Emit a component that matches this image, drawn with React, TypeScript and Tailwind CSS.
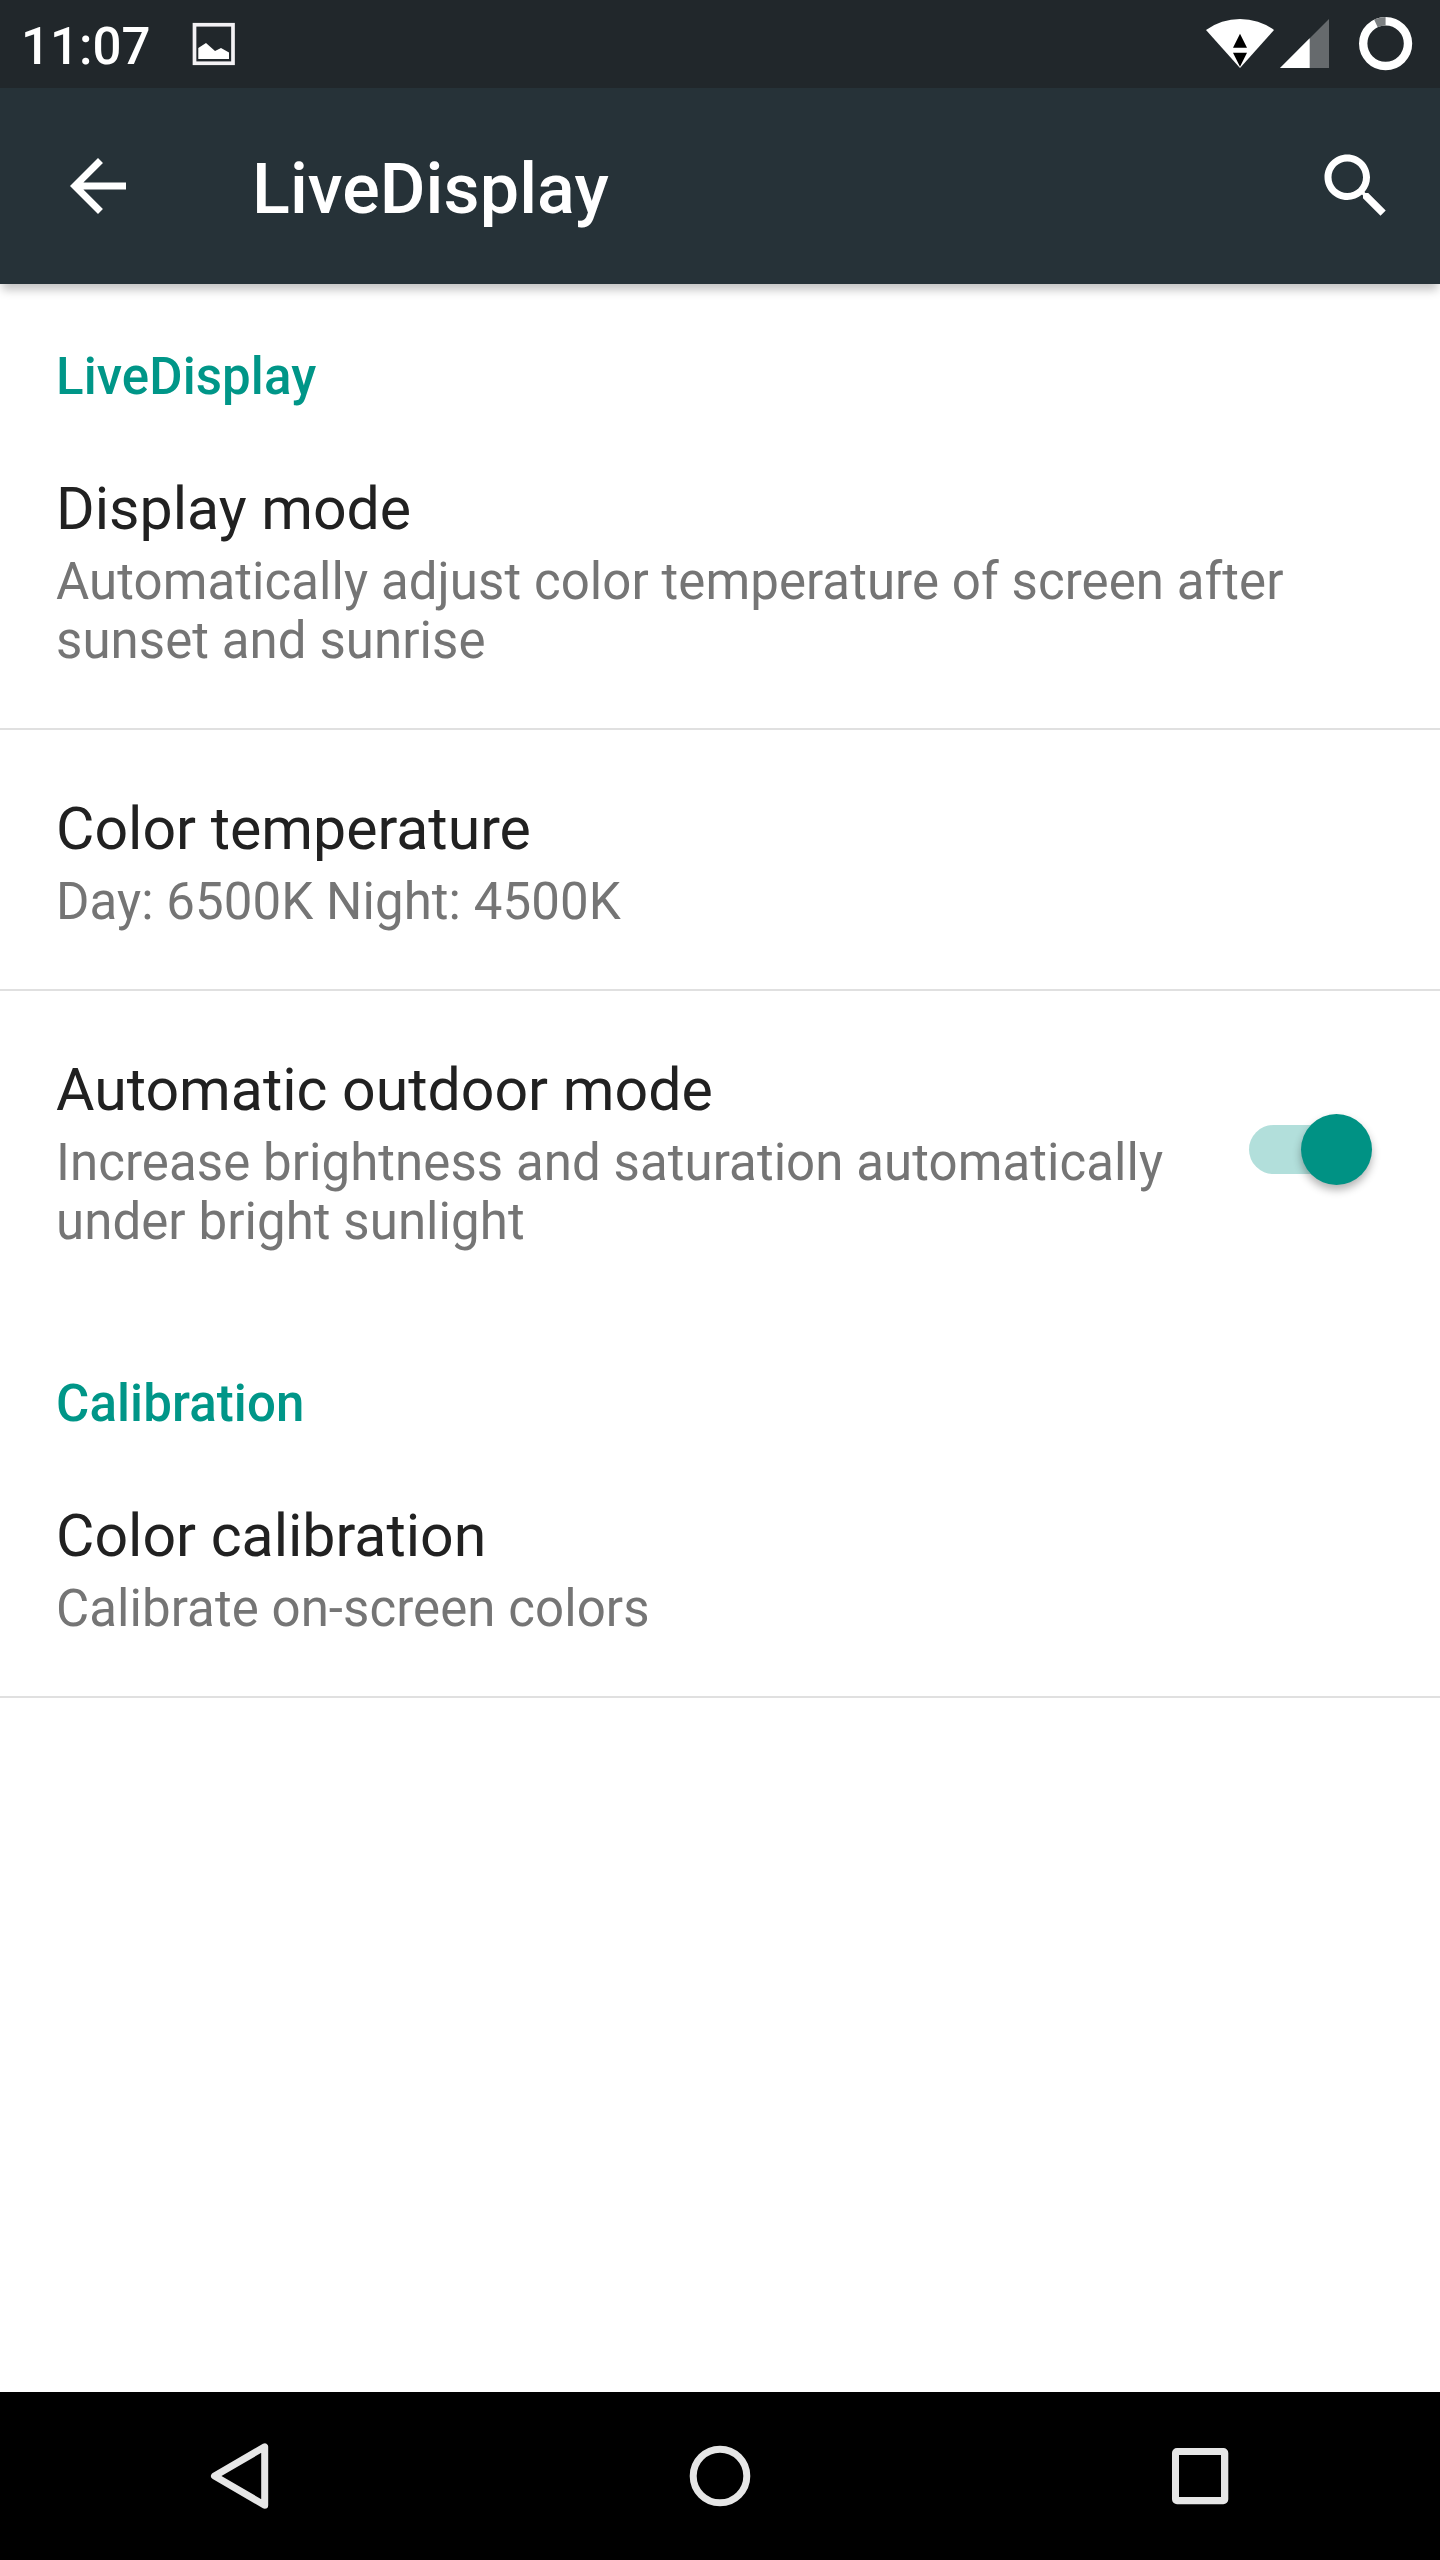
import React from 'react';

function Heading({ children }: { children: string }) {
  return <h2 className="h-[126px] px-14 pt-[63px] text-[51px] leading-[59px] font-medium tracking-[0.1px] text-[#009688]">{children}</h2>;
}

interface PreferenceProps {
  title: string;
  summary: string[];
  divider?: boolean;
  children?: React.ReactNode;
}

function Preference({ title, summary, divider = true, children }: PreferenceProps) {
  return (
    <div className={`flex items-start border-b-2 pl-14 ${divider ? 'border-[#e0e0e0]' : 'border-transparent'}`}>
      <div className="flex-1 pt-16 pb-[58px]">
        <div className="text-[59px] leading-[69px] whitespace-nowrap text-[#212121]">{title}</div>
        <div className="mt-[9px] text-[51px] leading-[59px] tracking-[0.07px] whitespace-nowrap text-[#757575]">
          {summary.map((line) => (
            <div key={line}>{line}</div>
          ))}
        </div>
      </div>
      {children}
    </div>
  );
}

function Switch() {
  return (
    <div role="switch" aria-checked="true" className="mt-[123px] mr-[68px] flex h-[71px] items-center">
      <div className="h-[49px] w-[90px] rounded-full bg-[#b2dfdb]" />
      <div className="-ml-[38px] size-[71px] rounded-full bg-[#009284] shadow-[0_5px_9px_rgba(0,0,0,0.3)]" />
    </div>
  );
}

function StatusBar() {
  return (
    <div className="flex h-[88px] shrink-0 bg-[#21272b] pl-[21px] text-white">
      <span className="w-[159px] pt-[17px] text-[51px] leading-[59px] font-medium">11:07</span>
      <svg width="70" height="88" viewBox="180 0 70 88" fill="none">
        <rect x="194.5" y="24.75" width="38.5" height="38.5" stroke="#f3f1f4" strokeWidth="3.7" />
        <path d="M198.3 48l7.7-5 9 8 6-3 8 4.5V59h-30.7z" fill="#fff" />
      </svg>
      <svg className="ml-auto" width="250" height="88" viewBox="0 0 250 88">
        <path d="M50 68L16 30a58 58 0 0 1 68 0z" fill="#fff" />
        <path d="M50 33.7l7 14H43zM43 52.7h14l-7 14z" fill="#000" />
        <path d="M90 68l49-49v49z" fill="#666a6d" />
        <path d="M90 68l29.7-29.7V68z" fill="#fff" />
        <circle cx="195.6" cy="43.6" r="22.4" fill="none" stroke="#fff" strokeWidth="8.4" />
        <path d="M195.6 21.2a22.4 22.4 0 0 0-9.7 2.2" fill="none" stroke="#7b7f81" strokeWidth="8.4" />
      </svg>
    </div>
  );
}

function AppBar() {
  return (
    <header className="z-10 flex h-[196px] shrink-0 items-center bg-[#263238] pr-[42px] pl-14 text-white shadow-[0_8px_9px_-2px_rgba(0,0,0,0.23)]">
      <svg width="84" height="84" viewBox="0 0 24 24" fill="currentColor">
        <path d="M20 11H7.83l5.59-5.59L12 4l-8 8 8 8 1.41-1.41L7.83 13H20v-2z" />
      </svg>
      <h1 className="flex-1 pt-1.5 pl-[112px] text-[70px] leading-[82px] font-medium tracking-[0.1px]">LiveDisplay</h1>
      <svg width="84" height="84" viewBox="0 0 24 24" fill="currentColor">
        <path d="M15.5 14h-.79l-.28-.27C15.41 12.59 16 11.11 16 9.5 16 5.91 13.09 3 9.5 3S3 5.91 3 9.5 5.91 16 9.5 16c1.61 0 3.09-.59 4.23-1.57l.27.28v.79l5 4.99L20.49 19l-4.99-5zm-6 0C7.01 14 5 11.99 5 9.5S7.01 5 9.5 5 14 7.01 14 9.5 11.99 14 9.5 14z" />
      </svg>
    </header>
  );
}

function NavigationBar() {
  return (
    <nav className="flex h-[168px] shrink-0 justify-between bg-black px-[180px] text-[#e6e6e6]">
      <svg width="120" height="168" viewBox="0 12 120 168" fill="none" stroke="currentColor" strokeWidth="7" strokeLinejoin="round">
        <path d="M34.5 96l50.2-29.2v58.4z" />
      </svg>
      <svg width="120" height="168" viewBox="0 12 120 168" fill="none" stroke="currentColor" strokeWidth="7">
        <circle cx="60" cy="96" r="26.8" />
      </svg>
      <svg width="120" height="168" viewBox="0 12 120 168" fill="currentColor" fillRule="evenodd">
        <path d="M37 68h46.3a5 5 0 0 1 5 5v46.3a5 5 0 0 1-5 5H37a5 5 0 0 1-5-5V73a5 5 0 0 1 5-5zM39 75v42h42V75z" />
      </svg>
    </nav>
  );
}

export default function App() {
  return (
    <div className="flex h-[2560px] w-[1440px] flex-col overflow-hidden bg-white font-[Roboto,sans-serif]">
      <StatusBar />
      <AppBar />
      <main className="flex-1">
        <Heading>LiveDisplay</Heading>
        <Preference title="Display mode" summary={['Automatically adjust color temperature of screen after', 'sunset and sunrise']} />
        <Preference title="Color temperature" summary={['Day: 6500K Night: 4500K']} />
        <Preference
          title="Automatic outdoor mode"
          summary={['Increase brightness and saturation automatically', 'under bright sunlight']}
          divider={false}
        >
          <Switch />
        </Preference>
        <Heading>Calibration</Heading>
        <Preference title="Color calibration" summary={['Calibrate on-screen colors']} />
      </main>
      <NavigationBar />
    </div>
  );
}
